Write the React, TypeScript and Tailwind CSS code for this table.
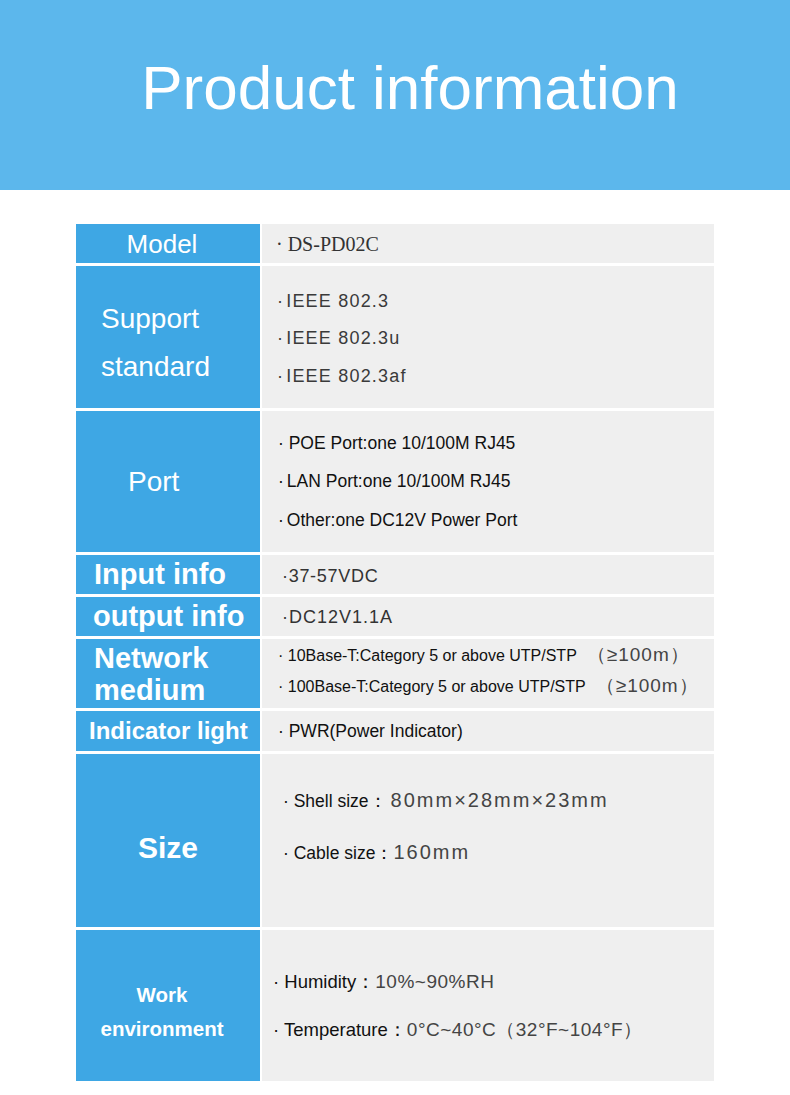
import React from "react";

const Label = ({ children, className }: { children: React.ReactNode; className: string }) => (
  <div className={`w-[184px] shrink-0 bg-[#3ea7e4] text-white flex flex-col ${className}`}>{children}</div>
);

const Value = ({ children, className }: { children: React.ReactNode; className: string }) => (
  <div className={`w-[452px] shrink-0 bg-[#efefef] flex flex-col justify-center ${className}`}>{children}</div>
);

const App = () => {
  return (
    <div className="w-[790px] h-[1095px] bg-white font-['Liberation_Sans',Arial,sans-serif]">
      <header className="h-[190px] bg-[#5cb7ec] flex justify-center pt-[57px] pl-[30px]">
        <h1 className="text-[62px] leading-[62px] text-white">Product information</h1>
      </header>

      <div className="ml-[76px] mt-[34px] w-[638px] flex flex-col gap-[3px]">
        {/* Model */}
        <div className="flex gap-[2px] h-[39px]">
          <Label className="items-center justify-center pr-[12px]">
            <span className="text-[26px] leading-none">Model</span>
          </Label>
          <Value className="pl-[14px]">
            <span className="text-[20px] text-[#333] font-['Liberation_Serif',serif]">· DS-PD02C</span>
          </Value>
        </div>

        {/* Support standard */}
        <div className="flex gap-[2px] h-[142px]">
          <Label className="justify-center pl-[25px] pt-[12px]">
            <span className="text-[28px] leading-[48px]">Support</span>
            <span className="text-[28px] leading-[48px]">standard</span>
          </Label>
          <Value className="pl-[15px] pt-[4px] text-[18px] leading-[37.5px] tracking-[1.2px] text-[#3a3a3a]">
            <span>·<span className="ml-[2px]">IEEE 802.3</span></span>
            <span>·<span className="ml-[2px]">IEEE 802.3u</span></span>
            <span>·<span className="ml-[2px]">IEEE 802.3af</span></span>
          </Value>
        </div>

        {/* Port */}
        <div className="flex gap-[2px] h-[141px]">
          <Label className="justify-center pl-[52px]">
            <span className="text-[28px] leading-none">Port</span>
          </Label>
          <Value className="pl-[16px] text-[17.5px] leading-[38.5px] text-[#111]">
            <span>· POE Port:one 10/100M RJ45</span>
            <span>·<span className="ml-[3px]">LAN Port:one 10/100M RJ45</span></span>
            <span>·<span className="ml-[3px]">Other:one DC12V Power Port</span></span>
          </Value>
        </div>

        {/* Input info */}
        <div className="flex gap-[2px] h-[39px]">
          <Label className="justify-center pl-[18px]">
            <span className="text-[29px] leading-none font-bold">Input info</span>
          </Label>
          <Value className="pl-[20px] pt-[4px]">
            <span className="text-[18px] tracking-[0.7px] text-[#333]">·37-57VDC</span>
          </Value>
        </div>

        {/* output info */}
        <div className="flex gap-[2px] h-[39px]">
          <Label className="justify-center pl-[17px]">
            <span className="text-[29px] leading-none font-bold">output info</span>
          </Label>
          <Value className="pl-[20px] pt-[2px]">
            <span className="text-[18px] tracking-[1px] text-[#333]">·DC12V1.1A</span>
          </Value>
        </div>

        {/* Network medium */}
        <div className="flex gap-[2px] h-[69px]">
          <Label className="justify-center pl-[18px]">
            <span className="text-[29px] leading-[32px] font-bold">Network</span>
            <span className="text-[29px] leading-[32px] font-bold">medium</span>
          </Label>
          <Value className="pl-[16px] pb-[6px] leading-[30px] text-[#111]">
            <span className="text-[16px]">
              · 10Base-T:Category 5 or above UTP/STP
              <span className="text-[19px] text-[#444] tracking-[1px] ml-[10px]">（≥100m）</span>
            </span>
            <span className="text-[16px]">
              · 100Base-T:Category 5 or above UTP/STP
              <span className="text-[19px] text-[#444] tracking-[1px] ml-[10px]">（≥100m）</span>
            </span>
          </Value>
        </div>

        {/* Indicator light */}
        <div className="flex gap-[2px] h-[40px]">
          <Label className="justify-center pl-[13px]">
            <span className="text-[24px] leading-none font-bold">Indicator light</span>
          </Label>
          <Value className="pl-[16px]">
            <span className="text-[17.5px] text-[#111]">· PWR(Power Indicator)</span>
          </Value>
        </div>

        {/* Size */}
        <div className="flex gap-[2px] h-[173px]">
          <Label className="items-center justify-center pt-[15px]">
            <span className="text-[30px] leading-none font-bold">Size</span>
          </Label>
          <Value className="pl-[21px] pb-[28px] leading-[51px]">
            <span className="text-[17.5px] text-[#111]">
              · Shell size：<span className="text-[20px] text-[#444] tracking-[2px] ml-[4px]">80mm×28mm×23mm</span>
            </span>
            <span className="text-[17.5px] text-[#111]">
              · Cable size：<span className="text-[20px] text-[#444] tracking-[2px]">160mm</span>
            </span>
          </Value>
        </div>

        {/* Work environment */}
        <div className="flex gap-[2px] h-[151px]">
          <Label className="items-center justify-center pt-[13px] pr-[12px]">
            <span className="text-[20.5px] leading-[34px] font-bold">Work</span>
            <span className="text-[20.5px] leading-[34px] font-bold">environment</span>
          </Label>
          <Value className="pl-[11px] leading-[48px]">
            <span className="text-[18.5px] text-[#111]">
              · Humidity：<span className="text-[19px] text-[#444] tracking-[0.5px]">10%~90%RH</span>
            </span>
            <span className="text-[18.5px] text-[#111]">
              · Temperature：<span className="text-[19px] text-[#444] tracking-[0.5px]">0°C~40°C（32°F~104°F）</span>
            </span>
          </Value>
        </div>
      </div>
    </div>
  );
};

export default App;
